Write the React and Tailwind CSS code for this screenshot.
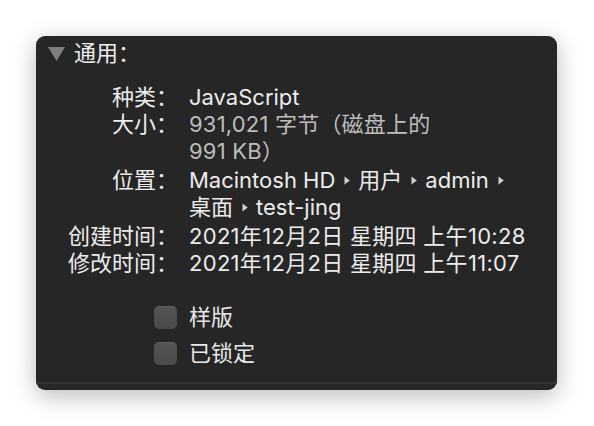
import React from "react";

const font = {
  fontFamily: '"Inter", "Noto Sans CJK SC", sans-serif',
};

function Arrow() {
  return (
    <svg width="6" height="9" viewBox="0 0 6 9" className="inline-block ml-[9px] mr-[8px] mb-[3px]">
      <path d="M0.5 0.5 L5.8 4.5 L0.5 8.5 Z" fill="#d0d0d0" />
    </svg>
  );
}

function Row({ label, children, wrapped }) {
  return (
    <>
      <div className={"text-right text-[#ececec] " + (wrapped ? "pb-[2px]" : "")}>{label}</div>
      <div className={"whitespace-nowrap " + (wrapped ? "pb-[2px]" : "")}>{children}</div>
    </>
  );
}

function Checkbox({ label }) {
  return (
    <div className="flex items-center h-[27px]">
      <div className="w-[23px] h-[23px] rounded-[5px] bg-gradient-to-b from-[#545454] to-[#4a4a4a] border-t border-[#5e5e5e]"></div>
      <span className="ml-[12px] text-[#e8e8e8]">{label}</span>
    </div>
  );
}

export default function App() {
  return (
    <div className="w-[594px] h-[426px] bg-white p-[36px]" style={font}>
      <div className="w-[521px] h-[354px] bg-[#262626] rounded-[9px] shadow-[0_6px_24px_rgba(0,0,0,0.28)] flex flex-col text-[22px] leading-[27px] overflow-hidden">
        <div className="flex items-center pt-[4px] pl-[12px]">
          <svg width="17" height="14" viewBox="0 0 17 14">
            <path d="M0 0 L17 0 L8.5 14 Z" fill="#7e7e7e" />
          </svg>
          <span className="ml-[9px] text-[#ececec]">通用：</span>
        </div>

        <div className="grid grid-cols-[142px_1fr] gap-x-[11px] mt-[17px]">
          <Row label="种类：">
            <span className="text-[#ececec]">JavaScript</span>
          </Row>
          <Row label="大小：" wrapped>
            <span className="text-[#bdbdbd] tracking-[0.2px]">
              931,021 字节（磁盘上的
              <br />
              991 KB）
            </span>
          </Row>
          <Row label="位置：" wrapped>
            <span className="text-[#ececec]">
              Macintosh HD<Arrow />用户<Arrow />admin<Arrow />
              <br />
              桌面<Arrow />test-jing
            </span>
          </Row>
          <Row label="创建时间：">
            <span className="text-[#ececec] tracking-[0.3px]">2021年12月2日 星期四 上午10:28</span>
          </Row>
          <Row label="修改时间：">
            <span className="text-[#ececec] tracking-[0.3px]">2021年12月2日 星期四 上午11:07</span>
          </Row>
        </div>

        <div className="pl-[118px] mt-[27px] flex flex-col gap-[9px]">
          <Checkbox label="样版" />
          <Checkbox label="已锁定" />
        </div>

        <div className="mt-auto mb-[6px] h-[2px] bg-[#343434]"></div>
      </div>
    </div>
  );
}
